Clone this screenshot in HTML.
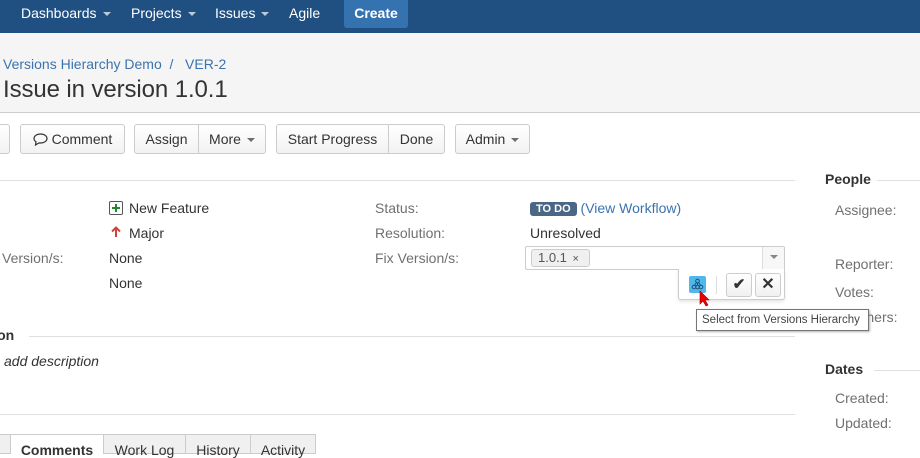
<!DOCTYPE html>
<html><head><meta charset="utf-8"><style>
*{box-sizing:border-box;margin:0;padding:0}
body{width:920px;height:450px;overflow:hidden;font-family:"Liberation Sans",Arial,sans-serif;font-size:14px;color:#333;background:#fff;position:relative}
.a{position:absolute;white-space:nowrap}
.nav{left:0;top:0;width:920px;height:33px;background:#205081}
.nav span{position:absolute;top:5px;color:#fff;font-size:14px}
.car{display:inline-block;width:0;height:0;border-left:4px solid transparent;border-right:4px solid transparent;border-top:4px solid currentColor;vertical-align:middle;margin-left:6px;opacity:.7}
.hdr{left:0;top:33px;width:920px;height:80px;background:#f5f5f5;border-bottom:1px solid #ccc}
.btn{position:absolute;top:124px;height:30px;border:1px solid #ccc;border-radius:3px;background:linear-gradient(#fff,#f2f2f2);font-size:14px;line-height:28px;text-align:center;color:#333}
.lab{color:#707070}
.line{position:absolute;height:1px;background:#e0e0e0}
.tab{position:absolute;top:434px;height:20px;border:1px solid #ccc;background:#f0f0f0;font-size:14px;padding-top:7px;text-align:center;color:#333}
</style></head><body>
<div class="a nav">
<span style="left:21px">Dashboards<i class="car"></i></span>
<span style="left:131px">Projects<i class="car"></i></span>
<span style="left:215px">Issues<i class="car"></i></span>
<span style="left:289px">Agile</span>
<div style="position:absolute;left:344px;top:0;width:64px;height:28px;background:#3572b0;border-radius:0 0 3px 3px;color:#fff;font-weight:bold;text-align:center;line-height:26px">Create</div>
</div>
<div class="a hdr"></div>
<div class="a" style="left:3px;top:56px;color:#3b73af">Versions Hierarchy Demo&nbsp; / &nbsp;&nbsp;VER-2</div>
<div class="a" style="left:3px;top:76px;font-size:24px;color:#333;letter-spacing:-0.1px">Issue in version 1.0.1</div>

<div class="btn" style="left:-10px;width:20px"></div>
<div class="btn" style="left:20px;width:105px"><svg width="15" height="13" viewBox="0 0 15 13" style="vertical-align:-2px"><path d="M7.5 1C3.8 1 1 3 1 5.5c0 1.4.8 2.5 2 3.3L2.5 12 6 9.9c.5.1 1 .1 1.5.1C11.2 10 14 8 14 5.5S11.2 1 7.5 1z" fill="none" stroke="#333" stroke-width="1.2"/></svg> Comment</div>
<div class="btn" style="left:134px;width:65px;border-radius:3px 0 0 3px">Assign</div>
<div class="btn" style="left:198px;width:68px;border-radius:0 3px 3px 0">More<i class="car"></i></div>
<div class="btn" style="left:276px;width:113px;border-radius:3px 0 0 3px">Start Progress</div>
<div class="btn" style="left:388px;width:57px;border-radius:0 3px 3px 0">Done</div>
<div class="btn" style="left:455px;width:75px">Admin<i class="car"></i></div>

<div class="line" style="left:0;top:180px;width:795px"></div>
<div class="a" style="left:825px;top:171px;font-weight:bold">People</div>
<div class="line" style="left:877px;top:180px;width:43px"></div>

<div class="a" style="left:109px;top:200px"><span style="display:inline-block;width:14px;height:14px;border:1px solid #555;border-radius:2px;vertical-align:-2px;position:relative;margin-right:6px"><span style="position:absolute;left:2px;top:5px;width:8px;height:2px;background:#1e8a2e"></span><span style="position:absolute;left:5px;top:2px;width:2px;height:8px;background:#1e8a2e"></span></span>New Feature</div>
<svg class="a" style="left:111px;top:226px" width="10" height="12" viewBox="0 0 10 12"><path d="M5 11V2M1 5.5L5 1.5 9 5.5" fill="none" stroke="#d04437" stroke-width="2"/></svg>
<div class="a" style="left:129px;top:225px">Major</div>
<div class="a lab" style="left:-3px;top:225px">:</div>
<div class="a lab" style="left:2px;top:250px">Version/s:</div>
<div class="a" style="left:109px;top:250px">None</div>
<div class="a" style="left:109px;top:275px">None</div>

<div class="a lab" style="left:375px;top:200px">Status:</div>
<div class="a lab" style="left:375px;top:225px">Resolution:</div>
<div class="a lab" style="left:375px;top:250px">Fix Version/s:</div>
<div class="a" style="left:530px;top:200px"><span style="background:#4a6785;color:#fff;font-weight:bold;font-size:11px;padding:1px 6px;border-radius:3px;vertical-align:1px">TO DO</span> <span style="color:#3b73af">(View Workflow)</span></div>
<div class="a" style="left:530px;top:225px">Unresolved</div>

<div class="a" style="left:525px;top:246px;width:260px;height:24px;border:1px solid #ccc;border-radius:2px;background:#fff"></div>
<div class="a" style="left:762px;top:247px;width:22px;height:22px;border-left:1px solid #ddd;background:#f7f7f7"><i class="car" style="position:absolute;left:1px;top:8px;color:#555"></i></div>
<div class="a" style="left:531px;top:249px;width:59px;height:18px;border:1px solid #ccc;border-radius:3px;background:#f0f0f0;color:#555;font-size:13px;line-height:16px;padding-left:6px">1.0.1 <span style="font-size:11px;margin-left:2px">×</span></div>
<div class="a" style="left:678px;top:269px;width:107px;height:31px;border:1px solid #ccc;border-top:none;border-radius:0 0 3px 3px;background:#fff;box-shadow:0 2px 3px rgba(0,0,0,.1)"></div>
<div class="a" style="left:689px;top:276px;width:17px;height:17px;background:#4fb7ea;border-radius:2px"><svg width="17" height="17" viewBox="0 0 17 17"><g fill="none" stroke="#1f4f7a" stroke-width="1"><circle cx="8.5" cy="5" r="1.8"/><circle cx="5" cy="11" r="1.8"/><circle cx="8.5" cy="11" r="1.8"/><circle cx="12" cy="11" r="1.8"/><path d="M8.5 7v2M7.5 6.5L5.5 9.3M9.5 6.5l2 2.8"/></g></svg></div>
<div class="a" style="left:716px;top:276px;width:1px;height:18px;background:#ddd"></div>
<div class="a" style="left:726px;top:273px;width:26px;height:24px;border:1px solid #ccc;border-radius:3px;background:linear-gradient(#fff,#f0f0f0);text-align:center;line-height:22px;font-size:15px;color:#333;font-weight:bold">✔</div>
<div class="a" style="left:755px;top:273px;width:26px;height:24px;border:1px solid #ccc;border-radius:3px;background:linear-gradient(#fff,#f0f0f0);text-align:center;line-height:22px;font-size:16px;color:#333;font-weight:bold">✕</div>
<svg class="a" style="left:698px;top:290px" width="14" height="18" viewBox="0 0 14 18"><path d="M2 1v13l3-3 3 5 2-1-3-5h4z" fill="#e00" stroke="#900" stroke-width=".6"/></svg>

<div class="a lab" style="left:835px;top:202px">Assignee:</div>
<div class="a lab" style="left:835px;top:256px">Reporter:</div>
<div class="a lab" style="left:835px;top:284px">Votes:</div>
<div class="a lab" style="left:835px;top:309px">Watchers:</div>
<div class="a" style="left:696px;top:309px;width:173px;height:22px;border:1px solid #767676;background:#fff;font-size:11.5px;line-height:20px;padding-left:5px;color:#444;box-shadow:1px 1px 2px rgba(0,0,0,.3)">Select from Versions Hierarchy</div>

<div class="a" style="left:-20px;top:327px;font-weight:bold">ption</div>
<div class="line" style="left:29px;top:336px;width:766px"></div>
<div class="a" style="left:4px;top:353px;font-style:italic">add description</div>
<div class="line" style="left:0;top:414px;width:795px"></div>

<div class="a" style="left:825px;top:361px;font-weight:bold">Dates</div>
<div class="line" style="left:874px;top:370px;width:46px"></div>
<div class="a lab" style="left:835px;top:390px">Created:</div>
<div class="a lab" style="left:835px;top:415px">Updated:</div>

<div class="tab" style="left:-5px;width:16px"></div>
<div class="tab" style="left:10px;width:94px;background:#fff;border-bottom:none;font-weight:bold">Comments</div>
<div class="tab" style="left:103px;width:83px">Work Log</div>
<div class="tab" style="left:185px;width:66px">History</div>
<div class="tab" style="left:250px;width:66px">Activity</div>
</body></html>
